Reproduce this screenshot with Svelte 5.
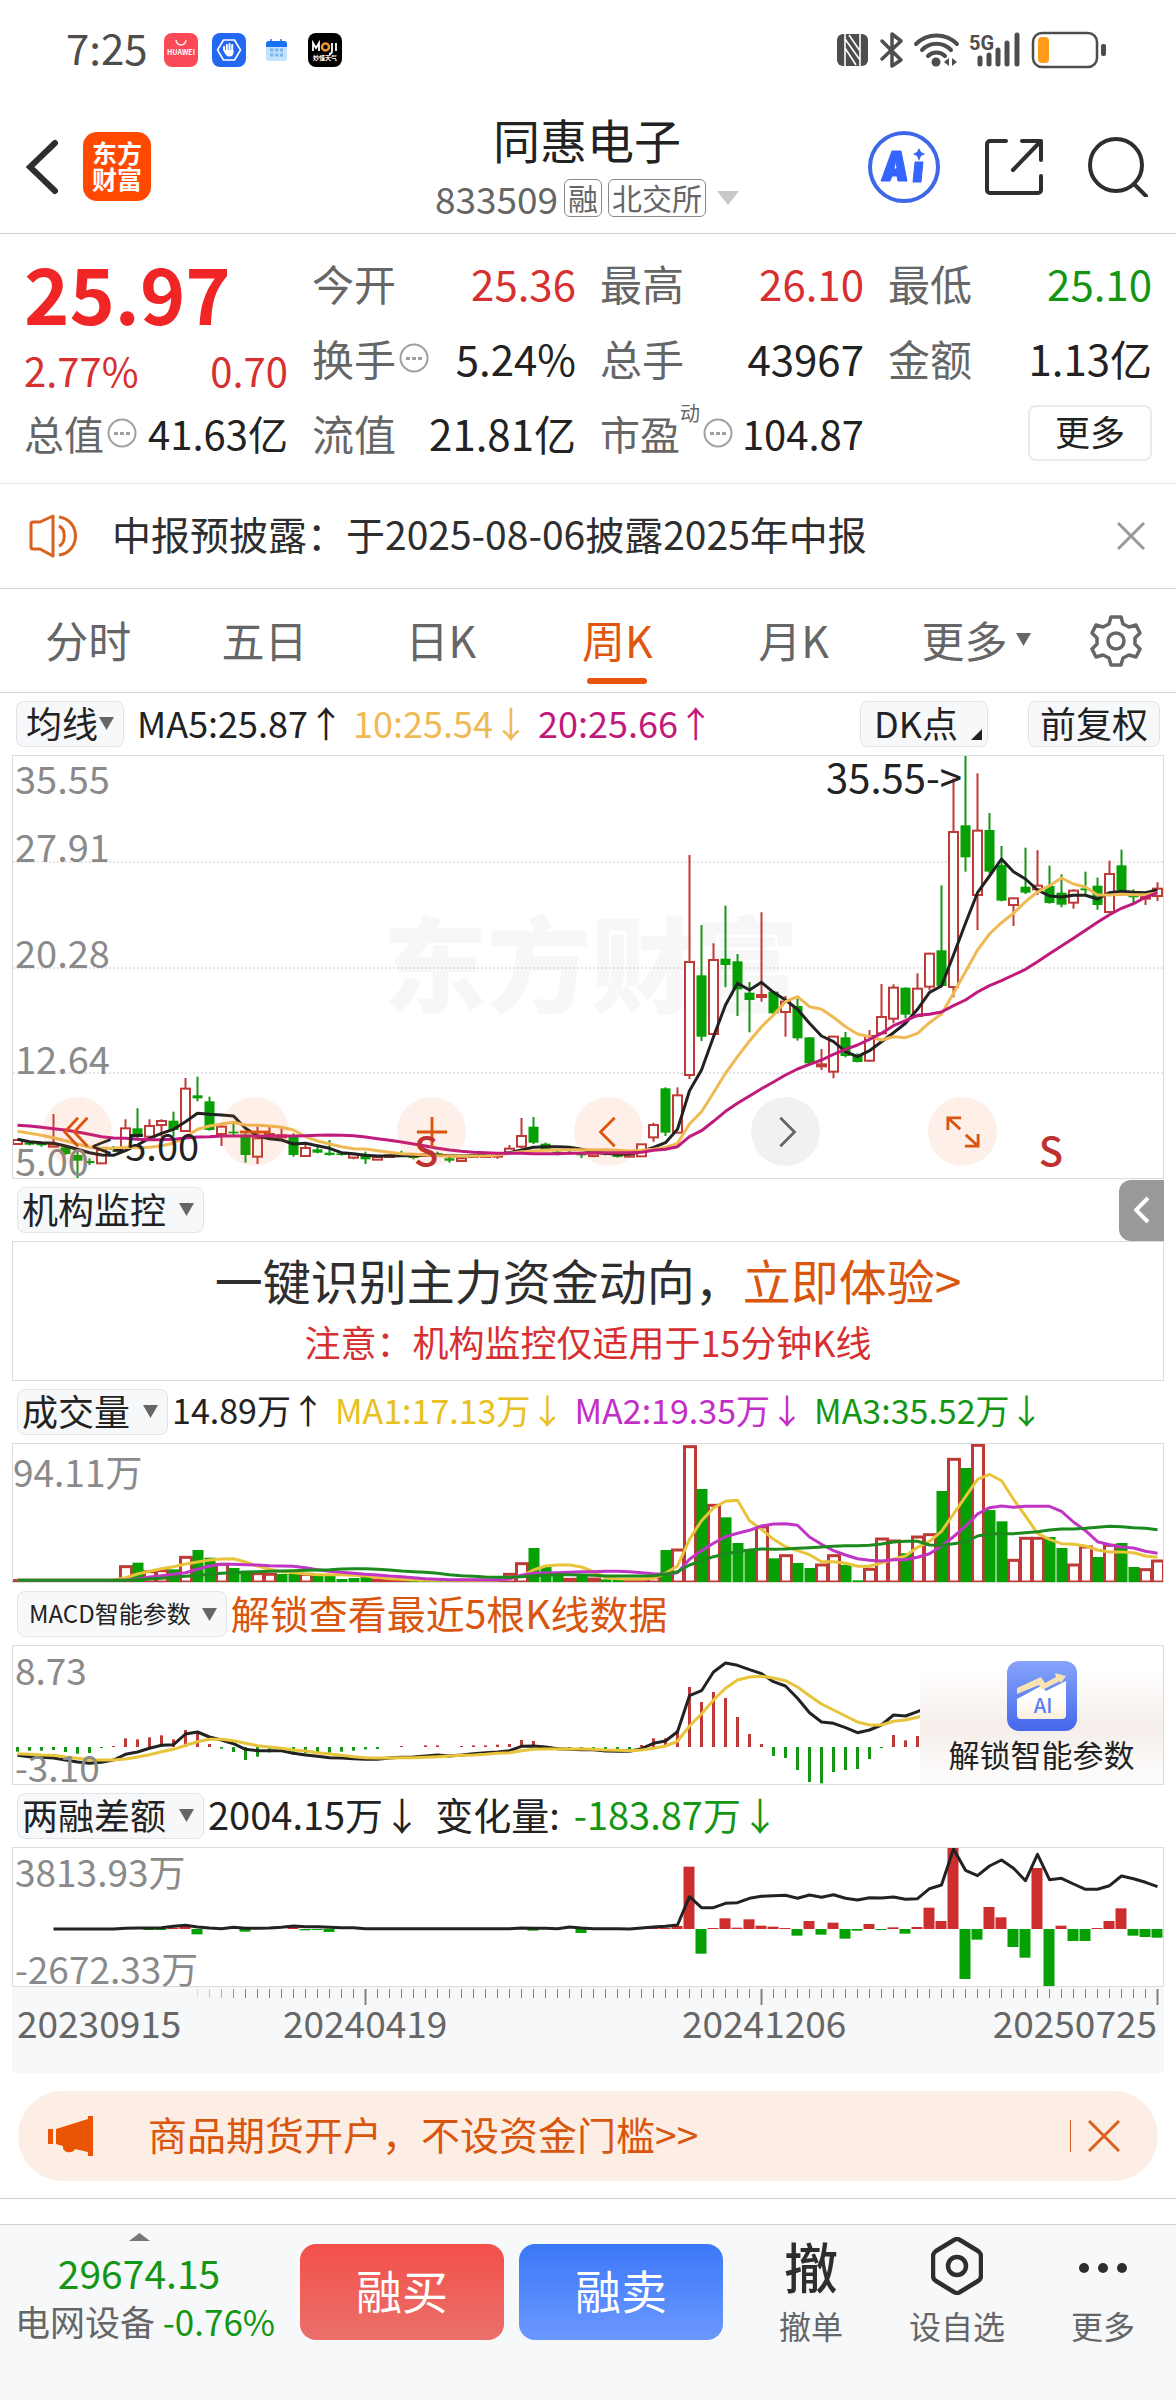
<script>
  const tabs = ["分时", "五日", "日K", "周K", "月K"];
  let active = $state("周K");

  const STEP = 12;
  const FIRST = 4.5;
  const cx = i => FIRST + i * STEP;

  // chart samples are stored at three units per pixel, "top" is the upper edge of the plot
  const scale = (v, top) => (v - top) / 3;

  function line(values, top, start = 0) {
    return values
      .map((v, i) => `${cx(i + start)},${scale(v, top).toFixed(1)}`)
      .join(" ");
  }

  // high, body top, body bottom, low, 1 = rising
  const candles = [
    [1198, 1200, 1212, 1212, 1], [1206, 1208, 1214, 1216, 0], [1206, 1210, 1216, 1220, 0], [1122, 1213, 1220, 1220, 1],
    [1215, 1222, 1242, 1245, 0], [1235, 1245, 1262, 1316, 0], [1255, 1263, 1269, 1275, 0], [1225, 1230, 1270, 1270, 1],
    [1218, 1224, 1230, 1236, 0], [1138, 1165, 1222, 1225, 1], [1105, 1165, 1190, 1195, 0], [1138, 1158, 1190, 1192, 1],
    [1138, 1143, 1155, 1190, 1], [1115, 1142, 1170, 1190, 0], [1014, 1046, 1173, 1173, 1], [1010, 1066, 1075, 1084, 0],
    [1070, 1084, 1170, 1172, 0], [1155, 1160, 1182, 1218, 1], [1150, 1175, 1180, 1185, 0], [1180, 1184, 1245, 1268, 0],
    [1160, 1195, 1250, 1272, 1], [1160, 1182, 1190, 1196, 1], [1163, 1186, 1192, 1195, 1], [1180, 1190, 1245, 1250, 0],
    [1215, 1224, 1248, 1248, 1], [1215, 1228, 1238, 1240, 0], [1200, 1238, 1245, 1247, 0], [1236, 1240, 1245, 1247, 0],
    [1240, 1243, 1253, 1258, 1], [1235, 1248, 1258, 1272, 0], [1248, 1251, 1259, 1259, 1], [1244, 1246, 1251, 1252, 1],
    [1232, 1243, 1248, 1250, 0], [1242, 1245, 1254, 1258, 0], [1240, 1243, 1248, 1250, 1], [1235, 1240, 1248, 1250, 0],
    [1250, 1255, 1262, 1268, 0], [1250, 1255, 1263, 1266, 1], [1243, 1246, 1251, 1252, 1], [1243, 1246, 1251, 1252, 1],
    [1240, 1245, 1250, 1256, 1], [1215, 1226, 1238, 1240, 1], [1134, 1188, 1220, 1225, 1], [1131, 1160, 1208, 1212, 0],
    [1208, 1211, 1228, 1230, 0], [1228, 1235, 1241, 1246, 0], [1232, 1237, 1242, 1244, 0], [1235, 1240, 1246, 1254, 0],
    [1235, 1240, 1248, 1252, 1], [1236, 1240, 1244, 1246, 0], [1240, 1243, 1251, 1253, 0], [1240, 1243, 1250, 1252, 1],
    [1212, 1213, 1249, 1250, 1], [1148, 1155, 1192, 1205, 1], [1042, 1045, 1178, 1188, 0], [1042, 1066, 1178, 1178, 1],
    [345, 666, 1005, 1017, 1], [555, 706, 890, 903, 0], [610, 660, 882, 885, 1], [497, 656, 675, 742, 0],
    [642, 664, 748, 828, 0], [726, 758, 780, 877, 0], [517, 765, 771, 785, 1], [753, 755, 820, 822, 0],
    [768, 785, 816, 890, 1], [775, 798, 895, 902, 0], [892, 892, 970, 972, 0], [927, 973, 979, 990, 1],
    [887, 890, 995, 1015, 1], [876, 892, 948, 952, 0], [940, 947, 966, 967, 0], [870, 888, 962, 965, 1],
    [732, 831, 880, 885, 1], [733, 743, 836, 850, 1], [742, 743, 824, 835, 0], [700, 746, 828, 832, 1],
    [638, 641, 740, 750, 1], [436, 631, 738, 740, 0], [115, 276, 741, 772, 1], [48, 256, 352, 395, 0],
    [100, 272, 465, 570, 1], [219, 270, 395, 400, 0], [318, 375, 482, 484, 0], [473, 475, 495, 558, 1],
    [323, 440, 458, 462, 0], [331, 437, 448, 465, 1], [377, 438, 489, 491, 0], [403, 458, 494, 502, 0],
    [448, 452, 488, 506, 1], [395, 445, 451, 465, 0], [413, 437, 495, 509, 0], [362, 402, 516, 518, 1],
    [329, 376, 450, 452, 0], [448, 466, 472, 490, 0], [465, 470, 476, 495, 1], [427, 446, 468, 483, 1]
  ];

  const ma5 = [
    1198, 1205, 1208, 1210, 1218, 1228, 1238, 1245, 1246, 1232, 1215, 1195, 1180, 1168, 1145, 1120, 1123, 1125, 1128, 1165,
    1188, 1196, 1200, 1212, 1210, 1217, 1225, 1238, 1241, 1246, 1248, 1248, 1247, 1247, 1246, 1246, 1247, 1248, 1247, 1246,
    1243, 1238, 1230, 1222, 1220, 1220, 1222, 1228, 1236, 1240, 1243, 1243, 1234, 1222, 1208, 1168, 1052, 990, 890, 795,
    730, 750, 727, 757, 780, 808, 850, 888, 905, 935, 950, 932, 905, 878, 850, 808, 757, 738, 645, 550,
    458, 408, 357, 395, 417, 450, 468, 471, 466, 466, 477, 458, 454, 457, 458, 450
  ];
  const ma10 = [
    1174, 1180, 1186, 1193, 1202, 1212, 1222, 1225, 1225, 1222, 1223, 1222, 1217, 1210, 1190, 1168, 1158, 1152, 1147, 1155,
    1156, 1158, 1162, 1170, 1190, 1203, 1212, 1220, 1226, 1227, 1232, 1237, 1241, 1243, 1245, 1247, 1248, 1249, 1248, 1247,
    1245, 1240, 1235, 1233, 1231, 1230, 1229, 1229, 1230, 1229, 1231, 1233, 1231, 1228, 1222, 1210, 1152, 1115, 1058, 1000,
    950, 903, 860, 825, 785, 770, 800, 808, 832, 860, 882, 890, 900, 890, 893, 880, 848, 822, 760, 695,
    630, 582, 548, 520, 485, 456, 437, 414, 432, 441, 465, 465, 463, 464, 464, 458
  ];
  const ma20 = [
    1156, 1158, 1162, 1166, 1170, 1176, 1183, 1190, 1194, 1195, 1198, 1199, 1199, 1198, 1194, 1191, 1190, 1188, 1188, 1188,
    1188, 1188, 1188, 1188, 1187, 1186, 1185, 1186, 1187, 1191, 1196, 1201, 1206, 1212, 1218, 1225, 1230, 1234, 1237, 1238,
    1240, 1240, 1240, 1241, 1241, 1241, 1240, 1240, 1239, 1238, 1238, 1238, 1237, 1231, 1228, 1220, 1190, 1172, 1144, 1114,
    1090, 1068, 1046, 1026, 1005, 987, 973, 960, 943, 928, 915, 898, 880, 857, 842, 826, 823, 816, 797, 780,
    756, 737, 722, 705, 688, 665, 641, 618, 595, 571, 547, 524, 505, 491, 472, 458
  ];

  // positive = rising bar, negative = falling bar
  const volume = [
    449, -452, -452, -452, -452, -452, -452, -452, -452, 407, -398, 422, 419, -418, 379, -360, -383, 400, -414, -422,
    428, 430, -432, -432, 430, -436, -432, -447, -444, -441, 447, 449, 450, -450, -451, -451, -451, 451, 451, 451,
    449, 430, 398, -354, -408, -433, 445, -434, 444, -448, -449, 452, 452, 440, -360, 357, 47, -177, 223, -262,
    -339, -357, 288, -385, 374, -399, -414, 402, 374, -405, -451, 415, 324, 330, -370, 318, 311, -183, 85, -114,
    43, -240, -274, 388, 322, 322, -321, -354, 402, 348, -381, 343, -339, -411, 416, 390
  ];
  const vol1 = [
    451, 451, 451, 451, 451, 451, 451, 451, 450, 443, 432, 424, 416, 410, 402, 396, 390, 387, 386, 396,
    408, 418, 425, 428, 431, 434, 434, 434, 436, 438, 442, 446, 448, 450, 451, 451, 451, 451, 451, 451,
    450, 445, 438, 420, 408, 405, 405, 411, 425, 443, 446, 447, 447, 445, 430, 408, 328, 272, 234, 214,
    211, 272, 298, 328, 350, 362, 374, 395, 395, 400, 409, 409, 398, 388, 378, 352, 334, 304, 252, 200,
    148, 133, 152, 208, 258, 310, 328, 341, 343, 348, 360, 366, 366, 368, 378, 382
  ];
  const vol2 = [
    451, 451, 451, 451, 451, 451, 451, 451, 451, 450, 447, 441, 437, 433, 428, 418, 408, 403, 403, 404,
    405, 407, 408, 409, 413, 419, 424, 427, 430, 433, 435, 438, 440, 443, 446, 448, 449, 449, 449, 449,
    449, 446, 436, 430, 429, 428, 427, 425, 425, 424, 424, 425, 428, 431, 433, 428, 388, 362, 340, 320,
    310, 301, 288, 282, 281, 286, 321, 343, 362, 375, 386, 391, 393, 389, 389, 382, 371, 348, 320, 289,
    252, 233, 228, 232, 229, 229, 229, 244, 276, 302, 335, 344, 351, 354, 364, 370
  ];
  const vol3 = [
    451, 451, 451, 451, 451, 451, 451, 451, 451, 451, 449, 447, 445, 442, 439, 436, 433, 430, 428, 427,
    425, 424, 423, 422, 421, 420, 419, 417, 416, 416, 418, 420, 423, 425, 427, 430, 434, 437, 439, 441,
    442, 442, 440, 437, 435, 434, 434, 435, 436, 438, 438, 438, 438, 437, 433, 425, 405, 393, 380, 372,
    365, 360, 357, 358, 357, 355, 353, 351, 349, 347, 347, 346, 342, 336, 334, 334, 345, 346, 341, 336,
    318, 312, 311, 311, 308, 305, 300, 297, 297, 295, 292, 289, 290, 293, 295, 299
  ];

  const MACD_ZERO = 951;
  const macd = [
    965, 962, 962, 960, 966, 971, 969, 954, 948, 925, 928, 922, 916, 928, 900, 905, 942, 956, 966, 990,
    980, 967, 962, 974, 970, 970, 968, 965, 962, 958, 957, 951, 948, 951, 946, 946, 951, 948, 946, 946,
    944, 942, 930, 933, 948, 954, 955, 957, 957, 958, 958, 958, 945, 925, 925, 900, 771, 816, 786, 804,
    861, 912, 942, 978, 984, 1020, 1056, 1060, 1026, 1020, 1017, 987, 954, 915, 931, 918
  ];
  const dif = [
    976, 980, 982, 984, 990, 996, 1000, 997, 990, 973, 966, 955, 946, 944, 912, 906, 921, 930, 941, 958,
    962, 962, 962, 970, 975, 979, 983, 984, 986, 988, 988, 984, 982, 981, 978, 975, 978, 975, 971, 968,
    966, 962, 949, 948, 951, 956, 958, 959, 959, 963, 964, 964, 956, 940, 933, 905, 797, 782, 726, 699,
    706, 719, 731, 755, 768, 805, 848, 876, 880, 893, 908, 900, 885, 855, 858, 845, 830
  ];
  const dea = [
    971, 973, 975, 976, 981, 985, 989, 990, 990, 987, 981, 974, 965, 958, 946, 935, 928, 928, 932, 940,
    947, 951, 955, 960, 963, 968, 972, 976, 980, 983, 984, 984, 983, 983, 982, 980, 978, 976, 975, 973,
    970, 968, 962, 958, 957, 957, 957, 957, 958, 960, 961, 962, 960, 955, 948, 934, 888, 852, 810, 775,
    750, 741, 739, 744, 752, 771, 797, 822, 840, 858, 876, 885, 885, 874, 870, 862, 852
  ];

  const MARGIN_ZERO = 417;
  const marginBars = [
    [11, 420], [12, 420], [13, 413], [14, 410], [15, 433], [19, 425], [23, 411], [24, 421], [25, 420], [26, 426],
    [43, 422], [47, 429], [53, 414], [54, 413], [55, 408], [56, 230], [57, 491], [58, 414], [59, 385], [60, 413],
    [61, 388], [62, 407], [63, 410], [64, 414], [65, 437], [66, 393], [67, 434], [68, 398], [69, 446], [70, 422],
    [71, 402], [72, 420], [73, 412], [74, 431], [75, 411], [76, 353], [77, 393], [78, 174], [79, 567], [80, 449],
    [81, 351], [82, 382], [83, 471], [84, 503], [85, 234], [86, 588], [87, 407], [88, 453], [89, 453], [90, 414],
    [91, 393], [92, 355], [93, 437], [94, 441], [95, 443]
  ];
  const marginLine = [
    417, 417, 417, 417, 417, 417, 415, 414, 414, 413, 409, 406, 411, 414, 416, 412, 415, 415, 414, 412,
    408, 410, 410, 412, 413, 413, 416, 416, 416, 416, 416, 416, 416, 416, 416, 416, 416, 416, 416, 414,
    415, 415, 416, 411, 414, 416, 416, 416, 417, 414, 411, 409, 405, 320, 353, 353, 340, 338, 325, 319,
    317, 316, 325, 315, 322, 314, 325, 330, 323, 324, 321, 328, 326, 296, 285, 177, 241, 257, 228, 210,
    235, 272, 193, 269, 265, 282, 298, 298, 287, 258, 266, 277, 290
  ];

  const ticks = Array.from({ length: 81 }, (_, i) => i + 15);
</script>

<div class="page">
  <div class="status">
    <span class="time">7:25</span>
    <svg class="app" viewBox="0 0 34 34">
      <rect width="34" height="34" rx="8" fill="#fb4a57" />
      <path d="M12 7a5 5 0 0 0 10 0" fill="none" stroke="#fff" stroke-width="1.3" />
      <text x="17" y="22" font-size="7" font-weight="700" fill="#fff" text-anchor="middle">HUAWEI</text>
    </svg>
    <svg class="app" viewBox="0 0 34 34">
      <rect width="34" height="34" rx="8" fill="#2268f2" />
      <path d="M11.500 7h11l6 10-6 10h-11l-6-10z" fill="none" stroke="#fff" stroke-width="1.600" stroke-linejoin="round" />
      <path d="M12 17v-3M14.800 18v-6M17.500 18v-7M20.200 18v-6" stroke="#fff" stroke-width="2" stroke-linecap="round" />
      <path d="M13.500 17h8v2c0 3-1.500 4.500-4 4.500-3 0-4-2-6-6z" fill="#fff" />
    </svg>
    <svg class="app" viewBox="0 0 34 34">
      <rect x="6" y="8" width="21" height="20" rx="3" fill="#c3e2fd" />
      <path d="M6 14v-3a3 3 0 0 1 3-3h15a3 3 0 0 1 3 3v3z" fill="#1872ee" />
      <path d="M11 6v4M21 6v4" stroke="#1872ee" stroke-width="1.500" />
      <path d="M10 17h13M10 22h13" stroke="#79b5f3" stroke-width="3" stroke-dasharray="3.500 1.500" />
    </svg>
    <svg class="app" viewBox="0 0 34 34">
      <rect width="34" height="34" rx="8" />
      <path d="M5 18V10l3 5 3-5v8M24 10v8c0 2-1 3-3 3M28 10v8" fill="none" stroke="#fff" stroke-width="1.800" />
      <circle cx="17.500" cy="14" r="3.500" fill="none" stroke="#f0942c" stroke-width="2.500" />
      <text x="17" y="27" font-size="6" font-weight="700" fill="#fff" text-anchor="middle">妙懂天气</text>
    </svg>
    <span class="grow"></span>
    <svg class="signals" viewBox="0 0 270 40" fill="none">
      <rect x="0" y="4" width="31" height="32" rx="6" fill="#4d4d4d" />
      <path d="M8 4v32M23 4v32M8 9l15 21M8 18l11 17M12 5l11 16" stroke="#fff" stroke-width="1.600" />
      <path d="M45 11l19 19-9 6V4l9 7-19 18" stroke="#4d4d4d" stroke-width="3.500" stroke-linejoin="round" stroke-linecap="round" />
      <g stroke="#4d4d4d" stroke-width="4" stroke-linecap="round">
        <path d="M79 14a29 29 0 0 1 41 0M85 20a20 20 0 0 1 29 0M91 26a12 12 0 0 1 17 0" />
      </g>
      <circle cx="99" cy="32" r="4.500" fill="#4d4d4d" />
      <path d="M112 28v8l-5-4zM115 28v8l5-4z" fill="#4d4d4d" />
      <text class="net" x="132" y="20" fill="#4d4d4d">5G</text>
      <path d="M143 28v6M152 25v9M161 20v14M170 13v21M180 5v29" stroke="#4d4d4d" stroke-width="5" stroke-linecap="round" />
      <rect x="196" y="3" width="64" height="34" rx="9" stroke="#4d4d4d" stroke-width="2.500" />
      <rect x="201" y="7" width="11" height="26" rx="4" fill="#ff9c1b" />
      <rect x="264" y="14" width="5" height="12" rx="2" fill="#4d4d4d" />
    </svg>
  </div>

  <header>
    <div class="side">
      <button class="icon" aria-label="返回">
        <svg width="34" height="56" viewBox="0 0 34 56"><path d="M29 4L4 28l25 24" fill="none" stroke="#2e2e2e" stroke-width="6" stroke-linecap="round" /></svg>
      </button>
      <span class="logo">东方<br />财富</span>
    </div>
    <div class="title">
      <h1>同惠电子</h1>
      <div class="code">
        833509 <span class="tag">融</span><span class="tag">北交所</span>
        <svg width="22" height="14" viewBox="0 0 22 14"><path d="M0 0h22L11 14z" fill="#c8c8c8" /></svg>
      </div>
    </div>
    <div class="side right">
      <button class="icon" aria-label="AI">
        <svg width="72" height="72" viewBox="0 0 72 72">
          <circle cx="36" cy="36" r="34" fill="none" stroke="#3f68e8" stroke-width="4" />
          <path d="M24 20h9l6 30h-9l-1-5h-5l-2 5h-9zM26 38h3l-1-9z" fill="#3565ff" stroke="#3565ff" stroke-linejoin="round" fill-rule="evenodd" />
          <path d="M47 31h8l-2 20h-8z" fill="#3565ff" stroke="#3565ff" stroke-linejoin="round" />
          <path d="M51 17l2 4 4 2-4 2-2 5-2-5-4-2 4-2z" fill="#3565ff" />
        </svg>
      </button>
      <button class="icon" aria-label="分享">
        <svg width="60" height="60" viewBox="0 0 60 60" fill="none" stroke="#2e2e2e" stroke-width="4" stroke-linecap="round" stroke-linejoin="round">
          <path d="M22 4H6a3 3 0 0 0-3 3v46a3 3 0 0 0 3 3h48a3 3 0 0 0 3-3V39M38 4h19v19M56 5L29 33" />
        </svg>
      </button>
      <button class="icon" aria-label="搜索">
        <svg width="60" height="60" viewBox="0 0 60 60" fill="none" stroke="#2e2e2e" stroke-width="4" stroke-linecap="round">
          <circle cx="28" cy="28" r="26" /><path d="M46 47l12 12" />
        </svg>
      </button>
    </div>
  </header>

  {#snippet dots()}
    <svg class="info" viewBox="0 0 30 30">
      <circle cx="15" cy="15" r="13.500" fill="none" stroke="#a0a0a0" stroke-width="2" />
      <path d="M7 14h4v3H7zM13 14h4v3h-4zM19 14h4v3h-4z" fill="#a0a0a0" />
    </svg>
  {/snippet}

  {#snippet arrow()}
    <svg class="caret" viewBox="0 0 15 13"><path d="M0 0h15L7.500 13z" fill="#666" /></svg>
  {/snippet}

  <section class="quote">
    <div class="price">
      <strong>25.97</strong>
      <div class="cell small up"><span>2.77%</span><span>0.70</span></div>
    </div>
    <div class="cell"><span>今开</span><b class="up">25.36</b></div>
    <div class="cell"><span>最高</span><b class="up">26.10</b></div>
    <div class="cell"><span>最低</span><b class="down">25.10</b></div>
    <div class="cell"><span>换手{@render dots()}</span><b>5.24%</b></div>
    <div class="cell"><span>总手</span><b>43967</b></div>
    <div class="cell"><span>金额</span><b>1.13亿</b></div>
    <div class="cell small"><span>总值{@render dots()}</span><b>41.63亿</b></div>
    <div class="cell"><span>流值</span><b>21.81亿</b></div>
    <div class="cell small"><span>市盈<sup>动</sup>{@render dots()}</span><b>104.87</b></div>
    <div class="cell end"><button class="more">更多</button></div>
  </section>

  <section class="notice">
    <svg width="50" height="44" viewBox="0 0 50 44" fill="none" stroke="#d9621e" stroke-width="3" stroke-linejoin="round">
      <path d="M2 10q0-2 2-2h7L24 2v40l-13-7H4q-2 0-2-2zM30 12c7 3 7 17 0 20M30 3c22 3 22 35 0 38" />
    </svg>
    <p>中报预披露：于2025-08-06披露2025年中报</p>
    <button class="icon" aria-label="关闭">
      <svg width="28" height="28" viewBox="0 0 28 28"><path d="M1 1l26 26M27 1L1 27" stroke="#999" stroke-width="3" /></svg>
    </button>
  </section>

  <nav class="tabs">
    {#each tabs as tab}
      <button class:active={tab === active} onclick={() => (active = tab)}>{tab}</button>
    {/each}
    <button class="last">更多{@render arrow()}</button>
    <button class="gear" aria-label="设置">
      <svg width="54" height="54" viewBox="0 0 54 54" fill="none" stroke="#666" stroke-width="3.500" stroke-linejoin="round">
        <path d="M22 3h10l2 7 6 3 7-2 4 8-5 5v6l5 5-4 8-7-2-6 3-2 7H22l-2-7-6-3-7 2-4-8 5-5v-6l-5-5 4-8 7 2 6-3z" />
        <circle cx="27" cy="27" r="8" />
      </svg>
    </button>
  </nav>

  <main>
    <div class="bar mid">
      <button class="pill tight">均线{@render arrow()}</button>
      <span class="lead">MA5:25.87↑</span>
      <span class="ma10">10:25.54↓</span>
      <span class="ma20">20:25.66↑</span>
      <span class="grow"></span>
      <button class="pill dk">DK点<svg width="11" height="11" viewBox="0 0 11 11"><path d="M11 0v11H0z" fill="#222" /></svg></button>
      <button class="pill adjust">前复权</button>
    </div>

    <div class="plot">
      <span class="watermark">东方财富</span>
      <svg class="tall" viewBox="0 0 1150 422" preserveAspectRatio="none">
        {#each [106, 212, 317] as y}
          <line x1="0" x2="1150" y1={y} y2={y} stroke="#ccc" stroke-dasharray="2 2" />
        {/each}
        {#each candles as [high, top, bottom, low, rising], i}
          {#if rising}
            <path class="stroke-up" d="M{cx(i)} {scale(high, 48)}V{scale(top, 48)}M{cx(i)} {scale(bottom, 48)}V{scale(low, 48)}" />
            <rect class="stroke-up" x={cx(i) - 4.5} y={scale(top, 48)} width="9" height={scale(bottom, top)} />
          {:else}
            <path class="stroke-down" d="M{cx(i)} {scale(high, 48)}V{scale(low, 48)}" />
            <rect class="fill-down" x={cx(i) - 5} y={scale(top, 48)} width="10" height={scale(bottom, top)} />
          {/if}
        {/each}
        <polyline points={line(ma5, 48)} stroke="#222" />
        <polyline points={line(ma10, 48)} stroke="#efb954" />
        <polyline points={line(ma20, 48)} stroke="#c01a7c" />
      </svg>
      <ul class="scale">
        <li>35.55</li>
        <li>27.91</li>
        <li>20.28</li>
        <li>12.64</li>
        <li>5.00</li>
      </ul>
      <span class="mark peak">35.55-&gt;</span>
      <span class="mark trough">&lt;-5.00</span>
      <div class="tools">
        <button aria-label="最左"><svg viewBox="0 0 36 36"><path d="M18 3L4 18l14 15M28 3L14 18l14 15" /></svg></button>
        <button aria-label="缩小"><svg viewBox="0 0 36 36"><path d="M2 18h32" /></svg></button>
        <button aria-label="放大"><svg viewBox="0 0 36 36"><path d="M2 18h32M18 2v32" /></svg></button>
        <button aria-label="左移"><svg viewBox="0 0 36 36"><path d="M24 3L9 18l15 15" /></svg></button>
        <button class="off" aria-label="右移"><svg viewBox="0 0 36 36"><path d="M12 3l15 15-15 15" /></svg></button>
        <button aria-label="全屏"><svg viewBox="0 0 36 36"><path d="M2 16V3h14M3 4l12 11M34 20v13H20M33 32L21 21" /></svg></button>
      </div>
      <span class="split first">S</span>
      <span class="split second">S</span>
    </div>

    <div class="bar">
      <button class="pill">机构监控{@render arrow()}</button>
      <span class="grow"></span>
      <button class="drawer" aria-label="展开">
        <svg width="16" height="28" viewBox="0 0 16 28"><path d="M14 2L2 14l12 12" fill="none" stroke="#fff" stroke-width="4" /></svg>
      </button>
    </div>

    <div class="plot banner">
      <p>一键识别主力资金动向，<a href="#try">立即体验&gt;</a></p>
      <small>注意：机构监控仅适用于15分钟K线</small>
    </div>

    <div class="bar compact">
      <button class="pill">成交量{@render arrow()}</button>
      <span>14.89万↑</span>
      <span class="v1">MA1:17.13万↓</span>
      <span class="v2">MA2:19.35万↓</span>
      <span class="v3">MA3:35.52万↓</span>
    </div>

    <div class="plot">
      <svg viewBox="0 0 1150 138" preserveAspectRatio="none">
        {#each volume as v, i}
          {#if v > 0}
            <rect class="stroke-up wide" x={cx(i) - 5} y={scale(v, 39)} width="11" height={Math.max(scale(453, v), 1)} />
          {:else}
            <rect class="fill-down" x={cx(i) - 5} y={scale(-v, 42)} width="11" height={scale(456, -v)} />
          {/if}
        {/each}
        <polyline points={line(vol1, 42)} stroke="#e8c43a" />
        <polyline points={line(vol2, 42)} stroke="#c135c6" />
        <polyline points={line(vol3, 42)} stroke="#1d8a1d" />
      </svg>
      <span class="top-label low">94.11万</span>
    </div>

    <div class="bar large">
      <button class="pill mini">MACD智能参数{@render arrow()}</button>
      <span class="orange">解锁查看最近5根K线数据</span>
    </div>

    <div class="plot">
      <svg viewBox="0 0 1150 138" preserveAspectRatio="none">
        {#each macd as v, i}
          <line
            class="wide {v < MACD_ZERO ? 'stroke-up' : 'stroke-down'}"
            x1={cx(i)} x2={cx(i)} y1={scale(MACD_ZERO, 648)} y2={scale(v, 648)} />
        {/each}
        <polyline points={line(dif, 648)} stroke="#222" />
        <polyline points={line(dea, 648)} stroke="#e8c43a" />
      </svg>
      <span class="top-label">8.73</span>
      <span class="bottom-label">-3.10</span>
      <button class="unlock">
        <svg width="70" height="70" viewBox="0 0 70 70">
          <defs>
            <linearGradient id="blue" x2="0" y2="1"><stop stop-color="#86a4fb" /><stop offset="1" stop-color="#4668ea" /></linearGradient>
            <linearGradient id="cream" x2="0" y2="1"><stop offset=".5" stop-color="#fff" /><stop offset="1" stop-color="#fbeedb" /></linearGradient>
          </defs>
          <rect width="70" height="70" rx="12" fill="url(#blue)" />
          <path d="M10 38l24-13 5 5 20-10v34q0 4-4 4H14q-4 0-4-4z" fill="url(#cream)" />
          <path d="M10 27l24-11 4 6 11-6-1-4 11 3-5 7-1-2-18 9-3-5-22 9z" fill="#f7e3b2" />
          <text x="36" y="52" font-size="20" font-weight="500" fill="#5b7cf0" text-anchor="middle">AI</text>
        </svg>
        解锁智能参数
      </button>
    </div>

    <div class="bar large">
      <button class="pill">两融差额{@render arrow()}</button>
      <span>2004.15万↓</span>
      <span class="change">变化量:</span>
      <span class="v3">-183.87万↓</span>
    </div>

    <div class="plot">
      <svg viewBox="0 0 1150 138" preserveAspectRatio="none">
        {#each marginBars as [i, v]}
          <rect
            class={v < MARGIN_ZERO ? "fill-up" : "fill-down"}
            x={cx(i) - 6} y={scale(Math.min(v, MARGIN_ZERO), 174)}
            width="11" height={scale(Math.max(v, MARGIN_ZERO), Math.min(v, MARGIN_ZERO))} />
        {/each}
        <polyline points={line(marginLine, 174, 3)} stroke="#222" />
      </svg>
      <span class="top-label">3813.93万</span>
      <span class="bottom-label">-2672.33万</span>
    </div>

    <div class="axis">
      <svg viewBox="0 0 1152 16" preserveAspectRatio="none">
        {#each ticks as i}
          <line
            x1={cx(i) + 1} x2={cx(i) + 1} y1="0" y2={i % 33 === 29 ? 16 : 9}
            stroke="#808080" stroke-width={i % 33 === 29 ? 2 : 1} opacity={i < 19 ? (i - 14) / 5 : 1} />
        {/each}
      </svg>
      <div class="dates">
        <span>20230915</span><span>20240419</span><span>20241206</span><span>20250725</span>
      </div>
    </div>
  </main>

  <aside class="promo">
    <svg width="46" height="40" viewBox="0 0 46 40" fill="#ea5504">
      <path d="M0 13h5v15H0zM8 13L40 3V0h5v40h-5v-4l-13-3c-2 5-11 4-12-1v-2l-7-2z" />
    </svg>
    <a href="#futures">商品期货开户，不设资金门槛&gt;&gt;</a>
    <button class="icon" aria-label="关闭广告">
      <svg width="32" height="32" viewBox="0 0 32 32"><path d="M1 1l30 30M31 1L1 31" stroke="#d9621e" stroke-width="3" /></svg>
    </button>
  </aside>

  <footer>
    <div class="index">
      <svg width="21" height="8" viewBox="0 0 21 8"><path d="M0 8L10.500 0 21 8z" fill="#777" /></svg>
      <span class="down points">29674.15</span>
      <div class="sector">电网设备 <span class="down">-0.76%</span></div>
    </div>
    <button class="trade buy">融买</button>
    <button class="trade sell">融卖</button>
    <div class="actions">
      <button><span class="glyph">撤</span>撤单</button>
      <button>
        <svg width="52" height="58" viewBox="0 0 52 58" fill="none" stroke="#2e2e2e" stroke-width="4.500" stroke-linejoin="round">
          <path d="M23 3q3-2 6 0l18 11q3 2 3 5v20q0 3-3 5L29 55q-3 2-6 0L5 44q-3-2-3-5V19q0-3 3-5z" /><circle cx="26" cy="29" r="9" />
        </svg>
        设自选
      </button>
      <button>
        <svg width="52" height="58" viewBox="0 0 52 58" fill="#2e2e2e"><circle cx="7" cy="31" r="5" /><circle cx="26" cy="31" r="5" /><circle cx="45" cy="31" r="5" /></svg>
        更多
      </button>
    </div>
  </footer>
</div>

<style>
  :global(body) {
    background: #f7f8fa;
  }

  .page {
    background: #fff;
    color: #222;
    font-family: "Noto Sans CJK SC", sans-serif;
    font-size: 36px;
    line-height: 1;
  }

  .page :global(*) {
    box-sizing: border-box;
  }

  button {
    display: flex;
    align-items: center;
    justify-content: center;
    margin: 0;
    padding: 0;
    border: 0;
    background: none;
    color: inherit;
    font: inherit;
    cursor: pointer;
    white-space: nowrap;
  }

  a {
    color: #d9560f;
    text-decoration: none;
  }

  h1,
  p,
  ul {
    margin: 0;
    padding: 0;
    font-weight: 400;
    list-style: none;
  }

  svg {
    flex: none;
  }

  .grow {
    flex: 1;
  }

  .up {
    color: #d63030;
  }

  .down {
    color: #149614;
  }

  .status {
    display: flex;
    align-items: center;
    gap: 14px;
    height: 100px;
    padding: 0 69px 0 66px;
  }

  .time {
    margin-right: 2px;
    padding-bottom: 6px;
    color: #4d4d4d;
    font-size: 42px;
  }

  .app {
    width: 34px;
    height: 34px;
  }

  .signals {
    width: 270px;
    height: 40px;
    overflow: visible;
  }

  .net {
    font-family: Roboto, sans-serif;
    font-size: 20px;
    font-weight: 700;
  }

  header {
    display: grid;
    grid-template-columns: 1fr auto 1fr;
    align-items: center;
    height: 134px;
    padding: 0 28px 0 26px;
    border-bottom: 1px solid #d0d0d0;
  }

  .side {
    display: flex;
    align-items: center;
    gap: 23px;
  }

  .right {
    justify-content: flex-end;
    gap: 44px;
  }

  .logo {
    padding: 7px 9px 10px;
    border-radius: 14px;
    background: #ff4800;
    color: #fff;
    font-size: 25px;
    font-weight: 700;
    line-height: 26px;
  }

  .title {
    display: flex;
    flex-direction: column;
    align-items: center;
    gap: 10px;
    padding-bottom: 2px;
  }

  h1 {
    font-size: 47px;
    line-height: 54px;
  }

  .code {
    display: flex;
    align-items: center;
    gap: 6px;
    color: #666;
    font-size: 37px;
    line-height: 44px;
  }

  .code svg {
    margin-left: 5px;
  }

  .tag {
    padding: 0 3px 2px;
    border: 1px solid #888;
    border-radius: 6px;
    font-size: 30px;
    line-height: 34px;
  }

  .quote {
    display: grid;
    grid-template-columns: repeat(4, minmax(0, 1fr));
    grid-auto-rows: 75px;
    column-gap: 24px;
    padding: 11px 24px 13px;
    border-bottom: 1px solid #e8e8e8;
  }

  .price {
    grid-row: span 2;
    display: flex;
    flex-direction: column;
    justify-content: space-between;
    padding: 8px 0 5px;
  }

  .price strong {
    color: #f02626;
    font-size: 77px;
    font-weight: 700;
  }

  .cell {
    display: flex;
    align-items: center;
    justify-content: space-between;
    font-size: 42px;
    white-space: nowrap;
  }

  .cell.small {
    font-size: 40px;
  }

  .cell span {
    display: flex;
    align-items: center;
    color: #666;
  }

  .cell.up span {
    color: inherit;
  }

  .cell b {
    font-weight: 400;
  }

  .end {
    justify-content: flex-end;
  }

  sup {
    align-self: flex-start;
    margin: -10px 0 0;
    font-size: 20px;
    line-height: 20px;
  }

  .info {
    width: 30px;
    height: 30px;
    margin-left: 3px;
  }

  .more {
    height: 56px;
    padding: 0 25px 5px;
    border: 2px solid #ebebeb;
    border-radius: 8px;
    font-size: 35px;
  }

  .notice {
    display: flex;
    align-items: center;
    height: 105px;
    padding: 0 31px 0 29px;
    border-bottom: 1px solid #d0d0d0;
    color: #2e2e2e;
    font-size: 39px;
  }

  .notice p {
    flex: 1;
    padding: 0 33px 5px;
  }

  .tabs {
    display: grid;
    grid-template-columns: repeat(5, 15%) 16% 1fr;
    height: 104px;
    border-bottom: 1px solid #d0d0d0;
    color: #666;
    font-size: 43px;
  }

  .tabs button {
    position: relative;
    padding-bottom: 3px;
  }

  .tabs .last {
    gap: 8px;
  }

  .tabs .gear {
    padding: 0 15px 0 0;
  }

  .tabs .active {
    color: #e0560f;
  }

  .active::after {
    content: "";
    position: absolute;
    bottom: 8px;
    left: calc(50% - 30px);
    width: 60px;
    height: 6px;
    border-radius: 3px;
    background: #e8520a;
  }

  .caret {
    width: 15px;
    height: 13px;
  }

  main {
    padding: 0 12px;
  }

  .bar {
    display: flex;
    align-items: center;
    gap: 9px;
    height: 62px;
    padding-left: 5px;
    white-space: nowrap;
  }

  .bar > span {
    padding-bottom: 4px;
  }

  .bar.compact {
    gap: 10px;
    font-size: 34px;
  }

  .compact .pill {
    margin-right: -6px;
  }

  .bar.large {
    gap: 4px;
    font-size: 38px;
  }

  .mid {
    padding: 0 4px;
  }

  .lead {
    margin-left: 4px;
  }

  .pill {
    gap: 13px;
    height: 46px;
    padding: 0 9px 4px 4px;
    border: 1px solid #e2e4e8;
    border-radius: 8px;
    background: #f7f8fa;
    font-size: 36px;
  }

  .pill .caret {
    margin-top: 3px;
  }

  .tight {
    gap: 1px;
    padding: 0 9px 4px;
  }

  .adjust {
    padding: 0 11px 4px;
  }

  .dk {
    align-items: flex-end;
    margin-right: 31px;
    padding: 0 5px 6px 13px;
  }

  .mini {
    gap: 11px;
    padding: 0 9px 3px 11px;
    font-size: 24px;
  }

  .ma10 {
    color: #efb954;
  }

  .ma20 {
    color: #c01a7c;
  }

  .v1 {
    color: #e8c020;
  }

  .v2 {
    color: #c22fc8;
  }

  .v3 {
    color: #149614;
  }

  .orange {
    color: #d9560f;
    font-size: 39px;
  }

  .change {
    margin: 0 10px;
  }

  .plot {
    position: relative;
    border: 1px solid #dcdcdc;
  }

  .plot > svg {
    position: relative;
    display: block;
    width: 100%;
    height: 138px;
  }

  .plot > .tall {
    height: 422px;
  }

  polyline {
    fill: none;
    stroke-width: 3;
    stroke-linejoin: round;
  }

  .stroke-up {
    fill: #fff;
    stroke: #bf3a36;
    stroke-width: 2;
  }

  .stroke-down {
    stroke: #149614;
    stroke-width: 2;
  }

  .wide {
    stroke-width: 3;
  }

  .fill-up {
    fill: #cc2e2e;
  }

  .fill-down {
    fill: #04a004;
  }

  .watermark {
    position: absolute;
    top: 152px;
    left: 50%;
    margin-left: -205px;
    color: #f7f7f7;
    font-size: 104px;
    font-weight: 900;
  }

  .scale {
    position: absolute;
    top: 3px;
    left: 2px;
    color: #8a8a8a;
    font-size: 38px;
  }

  .scale li {
    height: 106px;
  }

  .scale li:first-child {
    height: 68px;
  }

  .scale li:nth-child(4) {
    height: 102px;
  }

  .scale li:last-child {
    height: auto;
  }

  .mark {
    position: absolute;
    font-size: 38px;
  }

  .peak {
    top: 0;
    right: 201px;
    font-size: 40px;
  }

  .trough {
    top: 370px;
    left: 78px;
  }

  .tools {
    position: absolute;
    top: 341px;
    left: 30px;
    display: flex;
    gap: 108px;
  }

  .tools button {
    width: 69px;
    height: 69px;
    border-radius: 50%;
    background: rgba(250, 110, 40, 0.1);
  }

  .tools .off {
    background: #f1f1f1;
  }

  .tools svg {
    width: 34px;
    height: 34px;
    fill: none;
    stroke: #d9560f;
    stroke-width: 3;
  }

  .tools .off svg {
    stroke: #666;
  }

  .split {
    position: absolute;
    top: 373px;
    color: #bf3030;
    font-size: 40px;
    font-weight: 500;
  }

  .first {
    left: 401px;
  }

  .second {
    right: 100px;
  }

  .drawer {
    width: 45px;
    height: 61px;
    border-radius: 12px 0 0 12px;
    background: #999;
  }

  .banner {
    display: flex;
    flex-direction: column;
    align-items: center;
    gap: 20px;
    height: 140px;
    padding-top: 13px;
    color: #2e2e2e;
    font-size: 48px;
  }

  .banner small {
    color: #d63030;
    font-size: 36px;
  }

  .top-label,
  .bottom-label {
    position: absolute;
    left: 2px;
    color: #8a8a8a;
    font-size: 37px;
  }

  .top-label {
    top: 5px;
  }

  .low {
    top: 9px;
    left: 0;
  }

  .bottom-label {
    bottom: -1px;
  }

  .unlock {
    position: absolute;
    inset: 0 0 0 auto;
    flex-direction: column;
    gap: 7px;
    width: 243px;
    background: linear-gradient(#fff 15%, #f5eeea 60%, #fcfbfa 90%);
    font-size: 31px;
  }

  .axis {
    height: 86px;
    padding-top: 2px;
    background: #f7f8fa;
    color: #666;
  }

  .axis svg {
    display: block;
    width: 100%;
    height: 16px;
  }

  .dates {
    display: grid;
    grid-template-columns: 266px 35% 1fr auto;
    padding: 0 7px 0 5px;
    font-size: 37px;
    line-height: 34px;
  }

  .promo {
    display: flex;
    align-items: center;
    height: 90px;
    margin: 18px 18px 17px;
    padding: 0 38px 0 30px;
    border-radius: 45px;
    background: #fceee5;
    font-size: 39px;
  }

  .promo a {
    flex: 1;
    padding: 0 0 5px 54px;
  }

  .promo .icon {
    padding-left: 17px;
    border-left: 1px solid #d9621e;
  }

  footer {
    display: flex;
    align-items: flex-start;
    min-height: 202px;
    padding: 45px 0 0;
    border-top: 1px solid #d0d0d0;
    background: linear-gradient(#fff 25px, #d0d0d0 25px, #d0d0d0 26px, #f7f8fa 26px);
  }

  .index {
    display: flex;
    flex-direction: column;
    align-items: center;
    width: 300px;
    margin-top: -11px;
    padding-right: 22px;
    color: #666;
    font-size: 35px;
    white-space: nowrap;
  }

  .points {
    margin: 12px 0 11px;
    font-size: 39px;
  }

  .sector {
    margin-left: 12px;
  }

  .trade {
    width: 204px;
    height: 96px;
    margin-right: 15px;
    padding-bottom: 6px;
    border-radius: 16px;
    color: #fff;
    font-size: 46px;
  }

  .buy {
    background: linear-gradient(#f4504a, #ea706b);
  }

  .sell {
    background: linear-gradient(#3b78f7, #6b98ff);
  }

  .actions {
    display: flex;
    flex: 1;
    margin-top: -7px;
    color: #666;
    font-size: 32px;
  }

  .actions button {
    flex: 1;
    flex-direction: column;
    gap: 14px;
  }

  .glyph {
    height: 58px;
    color: #2e2e2e;
    font-size: 54px;
    font-weight: 500;
    line-height: 58px;
  }
</style>
